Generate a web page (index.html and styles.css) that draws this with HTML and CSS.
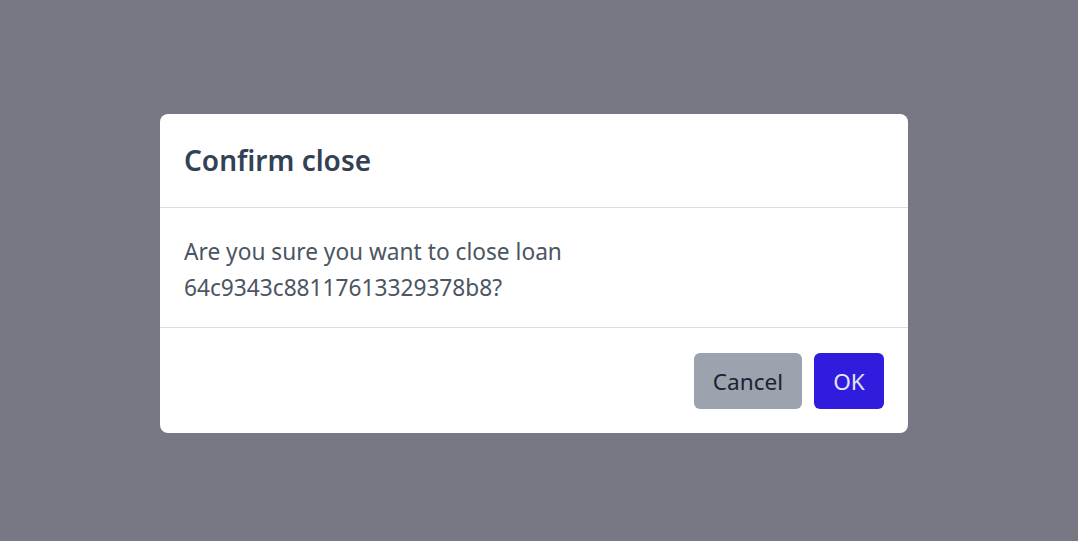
FILE: index.html
```html
<!DOCTYPE html>
<html>
<head>
<meta charset="utf-8">
<link rel="stylesheet" href="styles.css">
</head>
<body>
<div class="overlay">
  <div class="modal">
    <div class="modal-header"><h2 class="title">Confirm close</h2></div>
    <div class="modal-body"><p class="message">Are you sure you want to close loan<br>64c9343c88117613329378b8?</p></div>
    <div class="modal-footer">
      <button class="btn btn-cancel">Cancel</button>
      <button class="btn btn-ok">OK</button>
    </div>
  </div>
</div>
</body>
</html>
```
FILE: styles.css
```css
html, body { margin: 0; padding: 0; }
body { font-family: "Noto Sans", "Open Sans", sans-serif; }
.overlay {
  width: 1078px; height: 541px;
  background: #787884;
  display: flex; align-items: flex-start; justify-content: flex-start;
  box-sizing: border-box;
  padding-top: 114px;
  padding-left: 160px;
}
.modal {
  width: 748px;
  background: #fff;
  border-radius: 8px;
  overflow: hidden;
}
.modal-header { padding: 24px 24px; border-bottom: 1px solid #dcdde0; }
.title { margin: 0; font-size: 28px; font-weight: 600; color: #334155; line-height: 45px; }
.modal-body { padding: 26px 24px 21px; border-bottom: 1px solid #dcdde0; }
.message { margin: 0; font-size: 22.7px; line-height: 36px; color: #4b5563; }
.modal-footer { padding: 25px 24px 24px; display: flex; justify-content: flex-end; gap: 12px; }
.btn { height: 56px; border: none; border-radius: 6px; font-family: inherit; font-size: 22.6px; padding: 0; }
.btn-cancel { background: #9ca3af; color: #1e2230; width: 108px; }
.btn-ok { background: #2f1cdc; color: #e4e2fb; width: 70px; }
```
